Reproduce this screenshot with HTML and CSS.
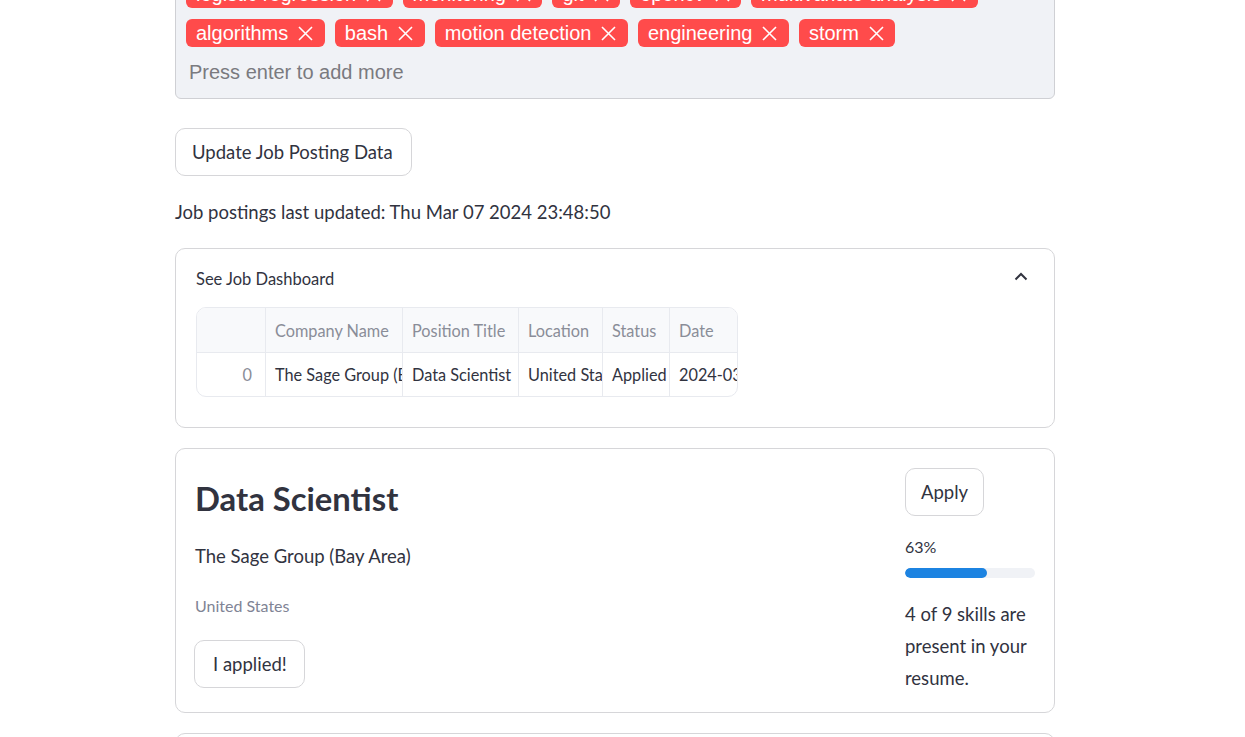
FILE: index.html
```html
<!DOCTYPE html>
<html lang="en">
<head>
<meta charset="utf-8">
<title>Job Dashboard</title>
<link rel="stylesheet" href="styles.css">
</head>
<body>
<div class="app">
  <main class="main">
    <div class="tag-box">
      <div class="tags">
        <span class="tag">logistic regression<svg class="x" viewBox="0 0 15 15"><path d="M1 1L14 14M14 1L1 14"/></svg></span>
        <span class="tag">monitoring<svg class="x" viewBox="0 0 15 15"><path d="M1 1L14 14M14 1L1 14"/></svg></span>
        <span class="tag">git<svg class="x" viewBox="0 0 15 15"><path d="M1 1L14 14M14 1L1 14"/></svg></span>
        <span class="tag">opencv<svg class="x" viewBox="0 0 15 15"><path d="M1 1L14 14M14 1L1 14"/></svg></span>
        <span class="tag">multivariate analysis<svg class="x" viewBox="0 0 15 15"><path d="M1 1L14 14M14 1L1 14"/></svg></span>
        <span class="tag">algorithms<svg class="x" viewBox="0 0 15 15"><path d="M1 1L14 14M14 1L1 14"/></svg></span>
        <span class="tag">bash<svg class="x" viewBox="0 0 15 15"><path d="M1 1L14 14M14 1L1 14"/></svg></span>
        <span class="tag">motion detection<svg class="x" viewBox="0 0 15 15"><path d="M1 1L14 14M14 1L1 14"/></svg></span>
        <span class="tag">engineering<svg class="x" viewBox="0 0 15 15"><path d="M1 1L14 14M14 1L1 14"/></svg></span>
        <span class="tag">storm<svg class="x" viewBox="0 0 15 15"><path d="M1 1L14 14M14 1L1 14"/></svg></span>
      </div>
      <div class="placeholder">Press enter to add more</div>
    </div>

    <button class="btn btn-update">Update Job Posting Data</button>

    <p class="updated">Job postings last updated: Thu Mar 07 2024 23:48:50</p>

    <section class="expander">
      <div class="exp-head">
        <span class="exp-label">See Job Dashboard</span>
        <svg class="chev" viewBox="0 0 14 9"><polyline points="1.5,7.5 7,2 12.5,7.5"/></svg>
      </div>
      <div class="table">
        <div class="row head">
          <div class="cell idx"></div>
          <div class="cell">Company Name</div>
          <div class="cell">Position Title</div>
          <div class="cell">Location</div>
          <div class="cell">Status</div>
          <div class="cell">Date</div>
        </div>
        <div class="row">
          <div class="cell idx num">0</div>
          <div class="cell">The Sage Group (Bay Area)</div>
          <div class="cell">Data Scientist</div>
          <div class="cell">United States</div>
          <div class="cell">Applied</div>
          <div class="cell">2024-03-07</div>
        </div>
      </div>
    </section>

    <section class="card">
      <div class="card-left">
        <h3 class="title">Data Scientist</h3>
        <p class="company">The Sage Group (Bay Area)</p>
        <p class="location">United States</p>
        <button class="btn btn-applied">I applied!</button>
      </div>
      <div class="card-right">
        <button class="btn btn-apply">Apply</button>
        <div class="pct">63%</div>
        <div class="bar"><div class="fill" style="width:63%"></div></div>
        <p class="skills">4 of 9 skills are present in your resume.</p>
      </div>
    </section>

    <section class="card card-next"></section>
  </main>
</div>
</body>
</html>
```
FILE: styles.css
```css
* { box-sizing: border-box; }
html, body { margin: 0; padding: 0; background: #fff; }
body {
  font-family: "Lato", "Source Sans Pro", sans-serif;
  font-size: 18.5px;
  color: #31333f;
  overflow: hidden;
}
.app { padding-right: 15px; }
.main {
  width: 880px;
  margin: -31px auto 0;
  display: flex;
  flex-direction: column;
}

/* tag input */
.tag-box {
  background: #f0f2f6;
  border: 1px solid #cfd0d4;
  border-radius: 6px;
  padding: 10px 10px 12px 10px;
}
.tags {
  display: flex;
  flex-wrap: wrap;
  gap: 11px 10px;
}
.tag {
  font-family: "Liberation Sans", Arial, sans-serif;
  font-size: 20px;
  height: 28px;
  line-height: 28px;
  display: inline-flex;
  align-items: center;
  gap: 10px;
  padding: 0 11.5px 0 10px;
  background: #ff4b4b;
  color: #fff;
  border-radius: 6px;
}
.x { width: 15px; height: 15px; fill: none; stroke: #fff; stroke-width: 1.6; }
.placeholder {
  font-family: "Liberation Sans", Arial, sans-serif;
  font-size: 20px;
  line-height: 28px;
  color: #7a7a7f;
  margin-top: 11px;
  padding-left: 3px;
}

/* buttons */
.btn {
  font-family: inherit;
  font-size: 18.5px;
  color: #31333f;
  background: #fff;
  border: 1px solid #d6d6d9;
  border-radius: 10px;
  height: 48px;
  padding: 0 16px;
  align-self: flex-start;
  cursor: pointer;
}
.btn-update { margin-top: 29px; padding: 0 18px 0 16px; }

.updated {
  margin: 20px 0 0;
  line-height: 32px;
}

/* expander */
.expander {
  margin-top: 20px;
  border: 1px solid #d6d6d9;
  border-radius: 10px;
  padding: 0 20px 30px;
}
.exp-head {
  height: 58px;
  display: flex;
  align-items: center;
  justify-content: space-between;
}
.exp-label { font-size: 16.5px; margin-top: 2px; }
.chev { width: 14px; height: 9px; fill: none; stroke: #31333f; stroke-width: 2; margin-right: 6px; margin-top: -3px; }

.table {
  width: 542px;
  border: 1px solid #e8eaef;
  border-radius: 10px;
  overflow: hidden;
  font-size: 16.3px;
}
.row {
  display: grid;
  grid-template-columns: 68px 137px 116px 84px 67px 68px;
  height: 44px;
}
.row + .row { border-top: 1px solid #e8eaef; }
.row.head { background: #f8f9fb; color: #8a8d98; }
.cell {
  padding: 0 9px;
  display: flex;
  align-items: center;
  white-space: nowrap;
  overflow: hidden;
  border-left: 1px solid #e8eaef;
}
.cell:first-child { border-left: none; }
.cell.num { justify-content: flex-end; color: #8a8d98; padding-right: 13px; }

/* job card */
.card {
  margin-top: 20px;
  border: 1px solid #d6d6d9;
  border-radius: 10px;
  padding: 19px 19px 18px 18px;
  display: grid;
  grid-template-columns: 1fr 130px;
  column-gap: 20px;
}
.card-left { display: flex; flex-direction: column; align-items: flex-start; }
.title {
  margin: 11px 0 0 1px;
  font-size: 32.8px;
  font-weight: 700;
  line-height: 39px;
}
.company { margin: 22px 0 0 1px; line-height: 32px; }
.location { margin: 22px 0 0 1px; font-size: 16px; line-height: 24px; color: #808495; }
.btn-applied { margin-top: 22px; padding: 0 17px 0 18px; }
.card-right { display: flex; flex-direction: column; align-items: flex-start; }
.btn-apply { padding: 0 15px; }
.pct { font-size: 16px; line-height: 24px; margin-top: 19px; }
.bar {
  width: 100%;
  height: 10px;
  margin-top: 9px;
  background: #f0f2f6;
  border-radius: 5px;
  overflow: hidden;
}
.fill { height: 100%; background: #1c83e1; border-radius: 5px; }
.skills { margin: 20px 0 0; line-height: 32px; }
.card-next { height: 60px; padding: 0; }
```
